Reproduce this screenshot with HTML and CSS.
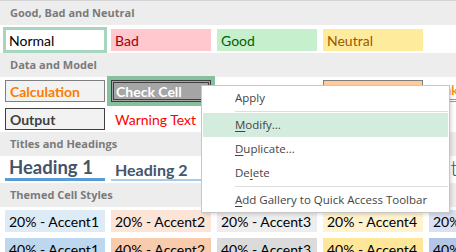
FILE: index.html
```html
<!DOCTYPE html>
<html lang="en">
<head>
    <meta charset="UTF-8">
    <meta name="viewport" content="width=device-width, initial-scale=1.0">
    <title>Cell Styles</title>
    <link rel="stylesheet" href="styles.css">
</head>
<body>
    <div class="gallery">
        <div class="band band-top">Good, Bad and Neutral</div>
        <div class="row row-first">
            <div class="cell normal selected">Normal</div>
            <div class="cell bad">Bad</div>
            <div class="cell good">Good</div>
            <div class="cell neutral">Neutral</div>
        </div>

        <div class="band">Data and Model</div>
        <div class="row">
            <div class="cell calculation">Calculation</div>
            <div class="cell check hovered">Check Cell</div>
            <div class="cell explanatory">Explanatory ...</div>
            <div class="cell input">Input</div>
            <div class="cell linked">Linked Cell</div>
            <div class="cell note">Note</div>
        </div>
        <div class="row row-short">
            <div class="cell output">Output</div>
            <div class="cell warning">Warning Text</div>
        </div>

        <div class="band">Titles and Headings</div>
        <div class="row row-short headings">
            <div class="cell h1">Heading 1</div>
            <div class="cell h2">Heading 2</div>
            <div class="cell h3">Heading 3</div>
            <div class="cell h4">Heading 4</div>
            <div class="cell title">Title</div>
            <div class="cell total">Total</div>
        </div>

        <div class="band">Themed Cell Styles</div>
        <div class="row">
            <div class="cell a1-20">20% - Accent1</div>
            <div class="cell a2-20">20% - Accent2</div>
            <div class="cell a3-20">20% - Accent3</div>
            <div class="cell a4-20">20% - Accent4</div>
            <div class="cell a5-20">20% - Accent5</div>
            <div class="cell a6-20">20% - Accent6</div>
        </div>
        <div class="row">
            <div class="cell a1-40">40% - Accent1</div>
            <div class="cell a2-40">40% - Accent2</div>
            <div class="cell a3-40">40% - Accent3</div>
            <div class="cell a4-40">40% - Accent4</div>
            <div class="cell a5-40">40% - Accent5</div>
            <div class="cell a6-40">40% - Accent6</div>
        </div>
    </div>

    <ul class="menu">
        <li class="item">Apply</li>
        <li class="sep"></li>
        <li class="item active"><u>M</u>odify...</li>
        <li class="item"><u>D</u>uplicate...</li>
        <li class="item">De<u>l</u>ete</li>
        <li class="sep"></li>
        <li class="item"><u>A</u>dd Gallery to Quick Access Toolbar</li>
    </ul>
</body>
</html>
```

FILE: styles.css
```css
*{
    margin: 0;
    padding: 0;
    box-sizing: border-box;
}
body{
    width: 456px;
    height: 252px;
    overflow: hidden;
    position: relative;
    background: #fff;
    font-family: Lato, "Liberation Sans", sans-serif;
}

/* section headers */
.band{
    height: 24px;
    padding-left: 10px;
    background: #ededed;
    color: #7a7a7a;
    font: bold 11px/24px "Open Sans", sans-serif;
    white-space: nowrap;
}
.band-top{
    height: 25px;
    border-top: 1px solid #d4d4d4;
    line-height: 23px;
}

/* rows of style swatches */
.row{
    display: flex;
    gap: 6px;
    height: 28px;
    padding: 3px 0 0 5px;
}
.row-first{
    padding-top: 4px;
}
.row-short{
    height: 27px;
}
.cell{
    flex: none;
    width: 100px;
    height: 22px;
    display: flex;
    align-items: center;
    padding: 0 4px;
    font-size: 14px;
    color: #000;
    white-space: nowrap;
    overflow: hidden;
}

.selected{
    box-shadow: 0 0 0 2px #a6d6bd, inset 0 0 0 1px #a6d6bd;
    overflow: visible;
}
.hovered{
    box-shadow: 0 0 0 4px #85bf9e;
}

.bad{ background: #ffc7ce; color: #9c0006; }
.good{ background: #c6efce; color: #006100; }
.neutral{ background: #ffeb9c; color: #9c5700; }

.calculation{
    background: #f2f2f2;
    border: 1px solid #7f7f7f;
    color: #fa7d00;
    font-weight: bold;
}
.check{
    background: #a5a5a5;
    border: 3px double #3f3f3f;
    color: #fff;
    font-weight: bold;
    padding-left: 2px;
}
.explanatory{ color: #7f7f7f; font-style: italic; }
.input{
    background: #ffcc99;
    border: 1px solid #7f7f7f;
    color: #3f3f76;
}
.linked{
    color: #fa7d00;
    border-bottom: 3px double #ff8001;
}
.note{
    background: #ffffcc;
    border: 1px solid #b2b2b2;
}
.output{
    background: #f2f2f2;
    border: 1px solid #3f3f3f;
    color: #3f3f3f;
    font-weight: bold;
}
.warning{ color: #ff0000; }

/* headings */
.headings .cell{
    align-items: flex-end;
    overflow: visible;
    color: #44546a;
    font-weight: bold;
}
.h1{
    font-size: 18.5px;
    border-bottom: 3px solid #5b9bd5;
}
.h2{
    font-size: 16px;
    border-bottom: 2px solid #a9cbea;
}
.h3{
    font-size: 14px;
    border-bottom: 2px solid #9bc2e6;
}
.h4{ font-size: 14px; }
.headings .title{
    font-size: 22px;
    font-weight: 300;
}
.headings .total{
    font-size: 14px;
    color: #000;
    border-top: 1px solid #5b9bd5;
    border-bottom: 3px double #5b9bd5;
}

/* themed */
.a1-20{ background: #ddebf7; }
.a2-20{ background: #fce4d6; }
.a3-20{ background: #ededed; }
.a4-20{ background: #fff2cc; }
.a5-20{ background: #d9e1f2; }
.a6-20{ background: #e2efda; }
.a1-40{ background: #bdd7ee; }
.a2-40{ background: #f8cbad; }
.a3-40{ background: #dbdbdb; }
.a4-40{ background: #ffe699; }
.a5-40{ background: #b4c6e7; }
.a6-40{ background: #c6e0b4; }

/* context menu */
.menu{
    position: absolute;
    left: 201px;
    top: 85px;
    width: 249px;
    list-style: none;
    background: #fff;
    border: 1px solid #c6c6c6;
    box-shadow: 2px 2px 3px rgba(0, 0, 0, 0.12);
    font: 11.5px "Open Sans", sans-serif;
    color: #444;
}
.item{
    height: 24px;
    line-height: 24px;
    padding-left: 32px;
    margin: 0 1px;
    white-space: nowrap;
}
.item u{
    text-underline-offset: 2px;
}
.active{
    background: #d4ecde;
}
.sep{
    height: 2px;
    margin: 1px 1px 0 33px;
    border-top: 1px solid #dedede;
}
```
